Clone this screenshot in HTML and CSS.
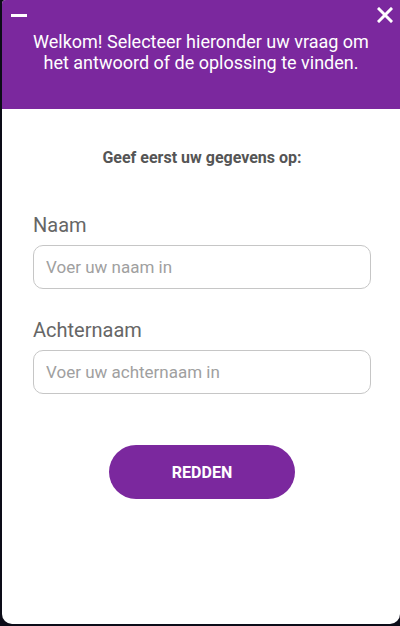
FILE: index.html
```html
<!DOCTYPE html>
<html lang="nl">
<head>
    <meta charset="UTF-8">
    <meta name="viewport" content="width=device-width, initial-scale=1.0">
    <title>Welkom</title>
    <link rel="stylesheet" href="styles.css">
</head>
<body>
    <div class="widget">
        <div class="header">
            <span class="minimize"></span>
            <svg class="close" width="16" height="16" viewBox="0 0 16 16">
                <path d="M2 2 L14 14 M14 2 L2 14" stroke="#fff" stroke-width="3" stroke-linecap="square"/>
            </svg>
            <p class="welcome">Welkom! Selecteer hieronder uw vraag om het antwoord of de oplossing te vinden.</p>
        </div>
        <div class="content">
            <p class="intro">Geef eerst uw gegevens op:</p>
            <div class="field">
                <label for="naam">Naam</label>
                <input id="naam" type="text" placeholder="Voer uw naam in">
            </div>
            <div class="field">
                <label for="achternaam">Achternaam</label>
                <input id="achternaam" type="text" placeholder="Voer uw achternaam in">
            </div>
            <div class="actions">
                <button>REDDEN</button>
            </div>
        </div>
    </div>
</body>
</html>
```

FILE: styles.css
```css
html, body {
    margin: 0;
    height: 100%;
}
body {
    background-color: #0c0c18;
    font-family: Roboto, Arial, sans-serif;
}
.widget {
    margin-left: 2px;
    height: 624px;
    background-color: #fff;
    border-radius: 4px 0 10px 10px;
    overflow: hidden;
}
.header {
    position: relative;
    height: 109px;
    background-color: #7b289e;
    box-sizing: border-box;
    padding: 31px 28px 0;
}
.minimize {
    position: absolute;
    top: 14px;
    left: 9px;
    width: 16px;
    height: 3px;
    background-color: #fff;
}
.close {
    position: absolute;
    top: 7px;
    right: 7px;
}
.welcome {
    margin: 0;
    color: #fff;
    font-size: 18px;
    line-height: 21px;
    text-align: center;
}
.content {
    padding: 39px 29px 0 31px;
}
.intro {
    margin: 0 0 46px;
    text-align: center;
    font-size: 16px;
    font-weight: bold;
    color: #555;
}
.field {
    display: flex;
    flex-direction: column;
    margin-bottom: 29px;
}
.field label {
    font-size: 20px;
    color: #666;
    margin-bottom: 8px;
}
.field input {
    height: 44px;
    box-sizing: border-box;
    border: 1px solid #c6c6c6;
    border-radius: 10px;
    padding: 0 12px;
    font-family: Roboto, Arial, sans-serif;
    font-size: 17px;
    color: #333;
}
.field input::placeholder {
    color: #a0a0a0;
}
.actions {
    display: flex;
    justify-content: center;
    padding-top: 22px;
}
button {
    width: 186px;
    height: 54px;
    border: none;
    border-radius: 27px;
    background-color: #7b289e;
    color: #fff;
    font-family: Roboto, Arial, sans-serif;
    font-size: 16px;
    font-weight: bold;
    cursor: pointer;
}
```
